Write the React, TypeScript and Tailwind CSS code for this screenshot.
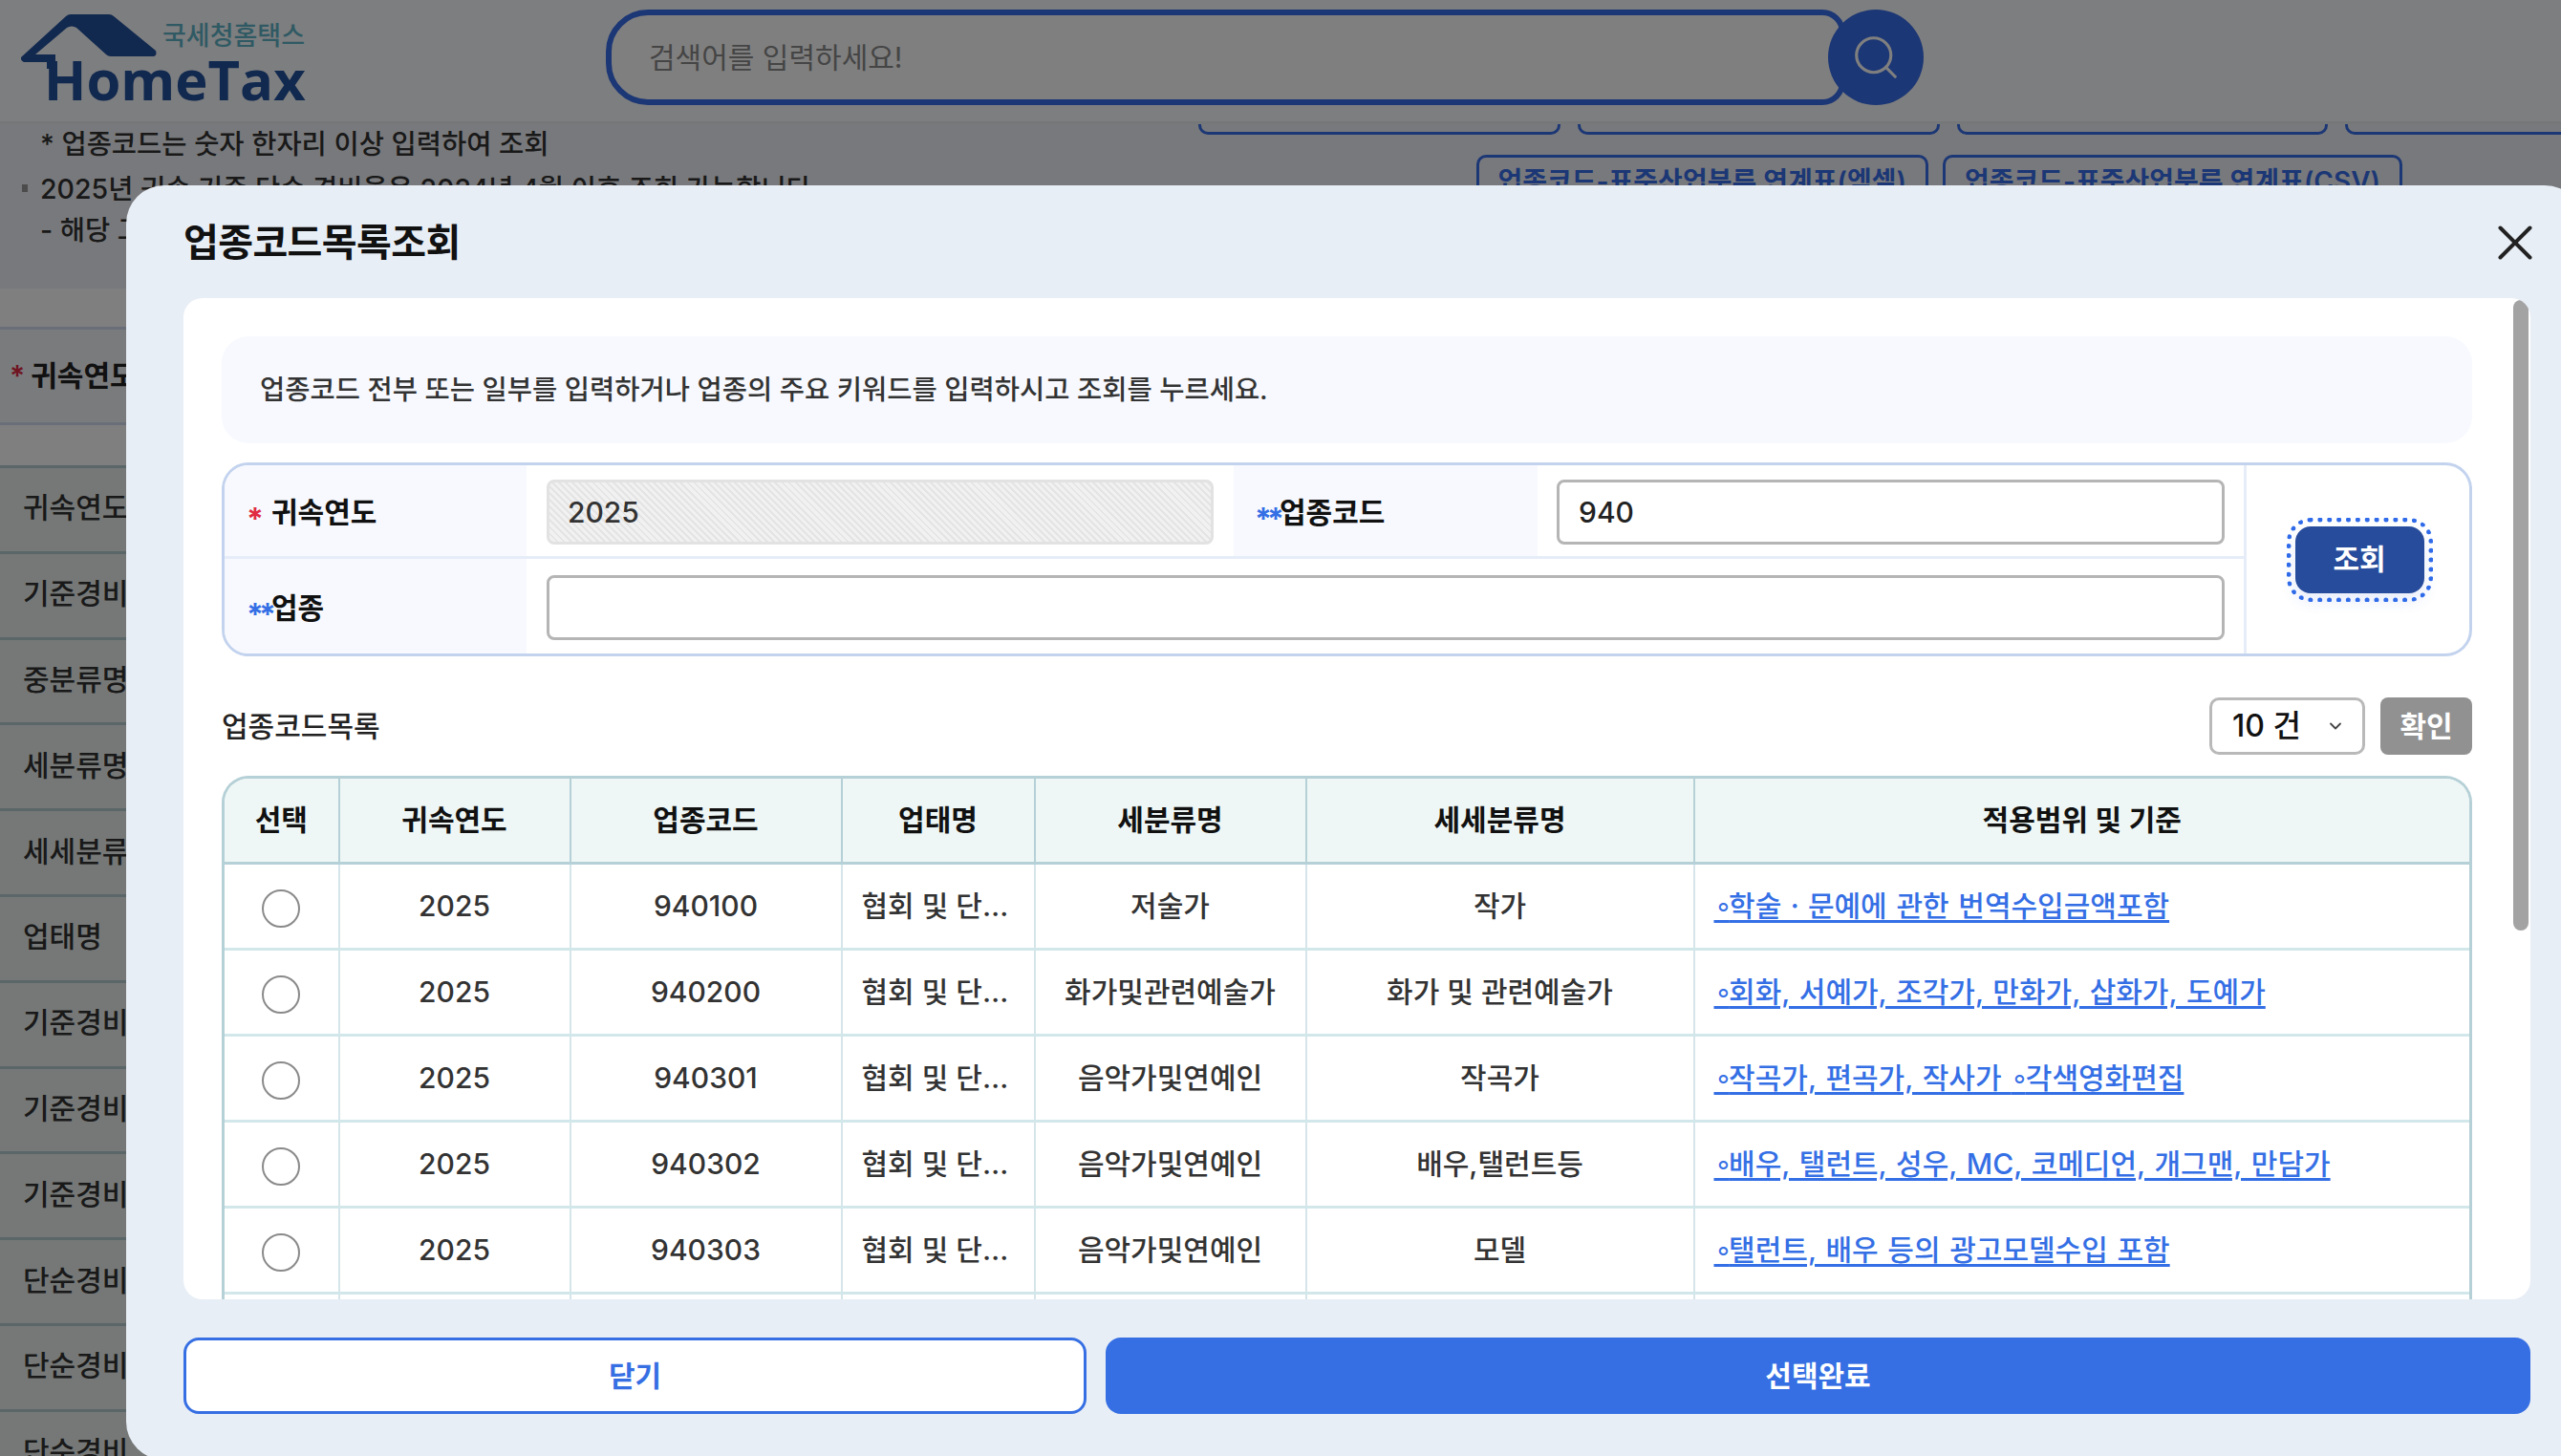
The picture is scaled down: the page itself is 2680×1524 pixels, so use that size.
import { ChevronDown, Search, X } from 'lucide-react';

type Row = {
    code: string;
    group: string;
    detail: string;
    scope: string;
};

const rows: Row[] = [
    { code: '940100', group: '저술가', detail: '작가', scope: '∘학술ㆍ문예에 관한 번역수입금액포함' },
    { code: '940200', group: '화가및관련예술가', detail: '화가 및 관련예술가', scope: '∘회화, 서예가, 조각가, 만화가, 삽화가, 도예가' },
    { code: '940301', group: '음악가및연예인', detail: '작곡가', scope: '∘작곡가, 편곡가, 작사가 ∘각색영화편집' },
    { code: '940302', group: '음악가및연예인', detail: '배우,탤런트등', scope: '∘배우, 탤런트, 성우, MC, 코메디언, 개그맨, 만담가' },
    { code: '940303', group: '음악가및연예인', detail: '모델', scope: '∘탤런트, 배우 등의 광고모델수입 포함' },
    { code: '940304', group: '음악가및연예인', detail: '가수', scope: '∘가수, 성악가' },
];

const heads = ['선택', '귀속연도', '업종코드', '업태명', '세분류명', '세세분류명', '적용범위 및 기준'];

const backRows = ['귀속연도', '기준경비', '중분류명', '세분류명', '세세분류', '업태명', '기준경비', '기준경비', '기준경비', '단순경비', '단순경비', '단순경비'];

function Logo() {
    return (
        <div className="relative ml-[22px] h-[127px] w-[300px] shrink-0">
            <svg className="absolute left-0 top-0" width="150" height="80" viewBox="0 0 150 80">
                <path
                    d="M0 60 L47 17 Q49 15 52 15 L92 15 Q95 15 97 17 L141 53 Q143 59 137 59 L94 59 Q91 59 89 57 L58 29 Q53 26 48 29 L15 57 L36 57 L36 72 L27 72 L27 65 L3 65 Q-1 63 0 60 Z"
                    fill="#23529e"
                />
            </svg>
            <div className="absolute left-[148px] top-[20px] text-[27px] leading-[36px] font-medium text-[#5fb4c8]">국세청홈택스</div>
            <div className="absolute left-[24px] top-[43px] font-['Open_Sans',sans-serif] text-[58px] leading-[80px] font-bold text-[#23529e]">HomeTax</div>
        </div>
    );
}

function Header() {
    return (
        <header className="relative z-10 flex h-[130px] items-start border-b-[3px] border-[#eceef2] bg-[#fbfcff]">
            <Logo />
            <div className="ml-[312px] mt-[10px] flex items-center">
                <div className="flex h-[100px] w-[1297px] items-center rounded-l-[44px] rounded-r-[24px] border-[6px] border-[#386eea] bg-white pl-[39px] text-[30px] text-[#8a8a8a]">
                    검색어를 입력하세요!
                </div>
                <div className="relative -ml-[18px] flex h-[100px] w-[100px] items-center justify-center rounded-full bg-[#386eea] text-white">
                    <Search size={54} strokeWidth={1.4} />
                </div>
            </div>
        </header>
    );
}

function PageBehind() {
    return (
        <div className="flex h-full flex-col">
            <Header />
            <section className="flex h-[172px] shrink-0 justify-between overflow-hidden bg-[#f1f3f8]">
                <div className="-mt-[2px] pl-[42px] text-[28.5px] leading-[45px] font-medium text-[#333]">
                    <p>* 업종코드는 숫자 한자리 이상 입력하여 조회</p>
                    <p className="relative mt-[2px]">
                        <span className="absolute -left-[19px] top-[18px] h-[8px] w-[6px] bg-[#999]" />
                        2025년 귀속 기준 단순 경비율은 2024년 4월 이후 조회 가능합니다.
                    </p>
                    <p className="-mt-[2px]">- 해당 고시 내용은 확인 후 조회</p>
                </div>
                <div className="flex flex-col items-end">
                    <div className="flex gap-[18px]">
                        <span className="h-[11px] w-[379px] rounded-b-[10px] border-x-[3px] border-b-[3px] border-[#386eea]" />
                        <span className="h-[11px] w-[379px] rounded-b-[10px] border-x-[3px] border-b-[3px] border-[#386eea]" />
                        <span className="h-[11px] w-[388px] rounded-b-[10px] border-x-[3px] border-b-[3px] border-[#386eea]" />
                        <span className="h-[11px] w-[226px] rounded-bl-[10px] border-b-[3px] border-l-[3px] border-[#386eea]" />
                    </div>
                    <div className="mr-[166px] mt-[21px] flex gap-[15px]">
                        <span className="h-[60px] rounded-[10px] border-[3px] border-[#386eea] px-[20px] text-[28px] leading-[50px] font-semibold text-[#386eea]">업종코드-표준산업분류 연계표(엑셀)</span>
                        <span className="h-[60px] rounded-[10px] border-[3px] border-[#386eea] px-[20px] text-[28px] leading-[50px] font-semibold text-[#386eea]">업종코드-표준산업분류 연계표(CSV)</span>
                    </div>
                </div>
            </section>
            <div className="h-[40px] shrink-0 bg-white" />
            <div className="flex h-[103px] shrink-0 items-center border-y-[3px] border-[#d3dcf0] bg-[#f4f6fa] pl-[10px] text-[30px] font-semibold text-[#222]">
                <span className="mr-[6px] text-[#e02b43]">*</span>귀속연도
            </div>
            <div className="h-[42px] shrink-0 bg-white" />
            {backRows.map((label, i) => (
                <div key={i} className="flex h-[89.8px] shrink-0 items-center border-t-[3px] border-[#b5ccd0] bg-[#ebf1ef] pb-[3px] pl-[24px] text-[30px] font-medium text-[#333]">
                    {label}
                </div>
            ))}
        </div>
    );
}

function Required({ marks, color }: { marks: string; color: string }) {
    return <span className={`w-[26px] translate-y-[8px] text-left text-[32px] leading-none font-bold tracking-[-5px] ${color}`}>{marks}</span>;
}

function SearchForm() {
    return (
        <div className="mt-[20px] flex h-[203px] overflow-hidden rounded-[28px] border-[3px] border-[#c3d3ee]">
            <div className="flex w-[2113px] flex-col">
                <div className="flex h-[98px] border-b-[3px] border-[#e6edf8]">
                    <div className="flex w-[316px] items-center bg-[#f7f9fe] pl-[23px] pt-[3px] text-[30px] font-semibold text-[#111]">
                        <Required marks="*" color="text-[#e02b43]" />
                        귀속연도
                    </div>
                    <div className="flex w-[740px] items-center px-[21px] pt-[3px]">
                        <div className="flex h-[68px] w-full items-center rounded-[8px] border-[3px] border-[#e2e2e2] bg-[repeating-linear-gradient(45deg,#e4e4e4,#e4e4e4_2px,#f1f1f1_2px,#f1f1f1_5px)] pl-[19px] text-[30px] font-medium text-[#333]">
                            2025
                        </div>
                    </div>
                    <div className="flex w-[318px] items-center bg-[#f7f9fe] pl-[22px] pt-[3px] text-[30px] font-semibold text-[#111]">
                        <Required marks="**" color="text-[#356fe5]" />
                        업종코드
                    </div>
                    <div className="flex flex-1 items-center pl-[20px] pr-[20px] pt-[3px]">
                        <div className="flex h-[68px] w-full items-center rounded-[8px] border-[3px] border-[#b5b5b5] bg-white pl-[20px] text-[30px] font-medium text-[#222]">
                            940
                        </div>
                    </div>
                </div>
                <div className="flex flex-1">
                    <div className="flex w-[316px] items-center bg-[#f7f9fe] pl-[23px] pt-[3px] text-[30px] font-semibold text-[#111]">
                        <Required marks="**" color="text-[#356fe5]" />
                        업종
                    </div>
                    <div className="flex flex-1 items-center pl-[21px] pr-[20px] pt-[3px]">
                        <div className="h-[68px] w-full rounded-[8px] border-[3px] border-[#b5b5b5] bg-white" />
                    </div>
                </div>
            </div>
            <div className="flex flex-1 items-center justify-center border-l-[3px] border-[#e6edf8] pl-[3px]">
                <button className="h-[70px] w-[135px] rounded-[16px] bg-[#274c9c] text-[30px] font-semibold text-white shadow-[0_8px_16px_rgba(60,100,220,0.12)] outline-[5px] outline-offset-[4px] outline-dotted outline-[#2f6be9]">
                    조회
                </button>
            </div>
        </div>
    );
}

// 불릿 뒤 간격이 좁아서 글자 단위로 나눔
function Scope({ text }: { text: string }) {
    return (
        <>
            {text.split('∘').slice(1).map((part, i) => (
                <span key={i}>
                    <span className="tracking-[-3.4px]">∘</span>
                    {part}
                </span>
            ))}
        </>
    );
}

function ResultTable() {
    return (
        <div className="mt-[22px] overflow-hidden rounded-t-[28px] border-x-[3px] border-t-[3px] border-[#b5d0d6]">
            <table className="w-full table-fixed border-collapse text-[30px] font-medium text-[#333]">
                <colgroup>
                    <col className="w-[119.5px]" />
                    <col className="w-[242px]" />
                    <col className="w-[284px]" />
                    <col className="w-[202px]" />
                    <col className="w-[284px]" />
                    <col className="w-[406px]" />
                    <col />
                </colgroup>
                <thead>
                    <tr className="h-[88px] border-b-[3px] border-[#b5d0d6] bg-[#eef7f6]">
                        {heads.map((head, i) => (
                            <th key={head} className={`font-semibold text-[#111] ${i < heads.length - 1 ? 'border-r-[2px] border-[#b5d0d6]' : ''}`}>
                                {head}
                            </th>
                        ))}
                    </tr>
                </thead>
                <tbody>
                    {rows.map(row => (
                        <tr key={row.code} className="h-[90px] border-b-[3px] border-[#d2e7ea]">
                            <td className="border-r-[2px] border-[#d5e5ea] text-center">
                                <span className="mx-auto mt-[6px] block h-[40px] w-[40px] rounded-full border-[2px] border-[#8a8a8a] bg-white" />
                            </td>
                            <td className="border-r-[2px] border-[#d5e5ea] text-center">2025</td>
                            <td className="border-r-[2px] border-[#d5e5ea] text-center">{row.code}</td>
                            <td className="truncate border-r-[2px] border-[#d5e5ea] px-[20px] text-left">협회 및 단체, 수리 및 기타 개인 서비스업</td>
                            <td className="border-r-[2px] border-[#d5e5ea] text-center">{row.group}</td>
                            <td className="border-r-[2px] border-[#d5e5ea] text-center">{row.detail}</td>
                            <td className="px-[20px] text-left text-[#356fe5] underline decoration-[2.5px] underline-offset-[4px] [word-spacing:1.7px]">
                                <Scope text={row.scope} />
                            </td>
                        </tr>
                    ))}
                </tbody>
            </table>
        </div>
    );
}

function Modal() {
    return (
        <div className="absolute -bottom-[4px] left-[132px] -right-[23px] top-[194px] z-30 flex flex-col rounded-[40px] bg-[#e8eef6]">
            <div className="flex h-[118px] shrink-0 items-center justify-between pl-[60px] pr-[40px] pt-[1px]">
                <h2 className="text-[40px] font-bold tracking-[-0.6px] text-[#111]">업종코드목록조회</h2>
                <X size={62} strokeWidth={1.55} className="text-[#222]" />
            </div>
            <div className="relative ml-[60px] mr-[55px] flex-1 overflow-hidden rounded-[20px] bg-white pl-[40px] pr-[61px] pt-[40px]">
                <div className="flex h-[112px] items-center rounded-[28px] bg-[#f7f9fe] pl-[40px] text-[28.5px] font-medium text-[#333]">
                    업종코드 전부 또는 일부를 입력하거나 업종의 주요 키워드를 입력하시고 조회를 누르세요.
                </div>
                <SearchForm />
                <div className="mt-[43px] flex h-[60px] items-center justify-between">
                    <span className="text-[30px] font-medium text-[#222]">업종코드목록</span>
                    <div className="flex gap-[16px]">
                        <div className="flex h-[60px] w-[163px] items-center justify-between rounded-[10px] border-[3px] border-[#b9b9b9] bg-white pl-[21px] pr-[18px] text-[32px] font-medium text-[#111]">
                            10 건
                            <ChevronDown size={20} strokeWidth={2.2} className="text-[#444]" />
                        </div>
                        <button className="h-[60px] w-[96px] rounded-[8px] bg-[#919191] text-[30px] font-semibold text-white">확인</button>
                    </div>
                </div>
                <ResultTable />
                <div className="absolute right-[2px] top-[2px] h-[660px] w-[16px] rounded-full bg-[#a3a3a3]" />
            </div>
            <div className="flex shrink-0 gap-[20px] pb-[48px] pl-[60px] pr-[55px] pt-[40px]">
                <button className="h-[80px] w-[945px] rounded-[16px] border-[3px] border-[#366fe3] bg-white text-[30px] font-semibold text-[#366fe3]">닫기</button>
                <button className="h-[80px] flex-1 rounded-[16px] bg-[#366fe3] text-[30px] font-semibold text-white">선택완료</button>
            </div>
        </div>
    );
}

export default function App() {
    return (
        <div className="relative h-[1524px] w-[2680px] overflow-hidden bg-white font-[Inter,'Noto_Sans_CJK_KR',sans-serif]">
            <PageBehind />
            <div className="absolute inset-0 z-20 bg-black/50" />
            <Modal />
        </div>
    );
}
